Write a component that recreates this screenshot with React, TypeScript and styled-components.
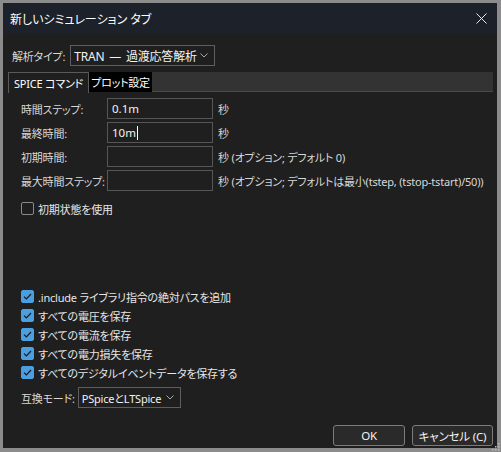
import React from "react";
import styled, { createGlobalStyle } from "styled-components";

const Global = createGlobalStyle`
  html, body { margin: 0; padding: 0; background: #1f1f1f; }
  * { box-sizing: border-box; }
  body {
    font-family: "Noto Sans", "Noto Sans CJK JP", sans-serif;
    font-feature-settings: "palt";
    font-size: 11px;
    letter-spacing: -0.2px;
    color: #e6e6e6;
  }
`;

const Window = styled.div`
  position: relative;
  width: 501px;
  height: 452px;
  display: flex;
  flex-direction: column;
  background: #1f1f1f;
  border-style: solid;
  border-color: #8c8c8c;
  border-width: 3px 4px 4px 3px;
`;

const TitleBar = styled.div`
  height: 31px;
  display: flex;
  align-items: center;
  justify-content: space-between;
  padding: 0 8px 0 7px;
  background: #1d222a;
  color: #ffffff;
  font-size: 12px;
  letter-spacing: 0;
`;

const CloseButton = styled.div`
  width: 16px;
  height: 16px;
  display: flex;
  align-items: center;
  justify-content: center;
`;

const Body = styled.div`
  flex: 1;
  display: flex;
  flex-direction: column;
  padding: 0 4px 2px 5px;
`;

const FieldRow = styled.div<{ $mt?: number; $ml?: number; $gap?: number }>`
  display: flex;
  align-items: center;
  gap: ${(p) => p.$gap ?? 3}px;
  margin-top: ${(p) => p.$mt ?? 0}px;
  margin-left: ${(p) => p.$ml ?? 0}px;
  height: 21px;
`;

const Label = styled.span<{ $w?: number }>`
  flex-shrink: 0;
  color: #d8d8d8;
  white-space: nowrap;
  ${(p) => (p.$w ? `width: ${p.$w}px;` : "")}
`;

const Select = styled.div<{ $w: number; $big?: boolean }>`
  flex-shrink: 0;
  width: ${(p) => p.$w}px;
  height: 21px;
  display: flex;
  align-items: center;
  justify-content: space-between;
  padding: 0 6px 0 3px;
  border: 1px solid #5e5e5e;
  background: #1f1f1f;
  color: #f2f2f2;
  white-space: nowrap;
  font-size: ${(p) => (p.$big ? 12 : 11)}px;
  word-spacing: ${(p) => (p.$big ? 2 : 0)}px;
`;

const Chevron = () => (
  <svg width="8" height="5" viewBox="0 0 8 5">
    <polyline points="0.5,0.5 4,4 7.5,0.5" fill="none" stroke="#a8a8a8" strokeWidth="1" />
  </svg>
);

const TabStrip = styled.div`
  display: flex;
  height: 20px;
  margin-top: 6px;
  background: #333333;
  border-bottom: 1px solid #4a4a4a;
`;

const Tab = styled.div<{ $active?: boolean }>`
  display: flex;
  align-items: center;
  padding: 0 ${(p) => (p.$active ? 5 : 2)}px;
  height: ${(p) => (p.$active ? 21 : 20)}px;
  color: #ffffff;
  background: ${(p) => (p.$active ? "#1f1f1f" : "#000000")};
  border: ${(p) => (p.$active ? "1px solid #5a5a5a" : "none")};
  border-bottom: none;
  white-space: nowrap;
  font-size: 11px;
`;

const Panel = styled.div`
  flex: 1;
  display: flex;
  flex-direction: column;
  padding: 6px 0 0 13px;
`;

const TimeRows = styled.div`
  display: flex;
  flex-direction: column;
  gap: 3px;
`;

const Input = styled.div`
  flex-shrink: 0;
  width: 106px;
  height: 21px;
  display: flex;
  align-items: center;
  padding-left: 4px;
  border: 1px solid #565656;
  background: #1f1f1f;
  color: #f4f4f4;
  font-size: 11.5px;
  letter-spacing: 0;
`;

const Caret = styled.span`
  display: inline-block;
  width: 1px;
  height: 14px;
  background: #ffffff;
  margin-left: 1px;
`;

const Unit = styled.span`
  margin-left: 2px;
  color: #d8d8d8;
  white-space: nowrap;
`;

const CheckRow = styled.div<{ $mt?: number }>`
  display: flex;
  align-items: center;
  gap: 4px;
  height: 19px;
  margin-top: ${(p) => p.$mt ?? 0}px;
  color: #e6e6e6;
  white-space: nowrap;
`;

const Box = styled.span<{ $on?: boolean }>`
  flex-shrink: 0;
  width: 13px;
  height: 13px;
  border-radius: 2px;
  display: flex;
  align-items: center;
  justify-content: center;
  background: ${(p) => (p.$on ? "#4a9fe0" : "transparent")};
  border: 1px solid ${(p) => (p.$on ? "#4a9fe0" : "#8a8a8a")};
`;

const Tick = () => (
  <svg width="9" height="7" viewBox="0 0 9 7">
    <polyline points="1,3.6 3.4,6 8,1" fill="none" stroke="#1a1a1a" strokeWidth="1.2" />
  </svg>
);

const Footer = styled.div`
  display: flex;
  justify-content: flex-end;
  gap: 7px;
`;

const Button = styled.div<{ $w: number }>`
  width: ${(p) => p.$w}px;
  height: 21px;
  display: flex;
  align-items: center;
  justify-content: center;
  border: 1px solid #7c7c7c;
  border-radius: 3px;
  background: #2a2a2a;
  color: #f2f2f2;
  white-space: nowrap;
  font-size: 11.5px;
`;

const Grip = styled.svg`
  position: absolute;
  right: -3px;
  bottom: -3px;
`;

const checks = [
  ".include ライブラリ指令の絶対パスを追加",
  "すべての電圧を保存",
  "すべての電流を保存",
  "すべての電力損失を保存",
  "すべてのデジタルイベントデータを保存する",
];

const timeFields = [
  { label: "時間ステップ:", value: "0.1m", note: "" },
  { label: "最終時間:", value: "10m", note: "", caret: true },
  { label: "初期時間:", value: "", note: "(オプション; デフォルト 0)" },
  {
    label: "最大時間ステップ:",
    value: "",
    note: "(オプション; デフォルトは最小(tstep, (tstop-tstart)/50))",
  },
];

export default function App() {
  return (
    <>
      <Global />
      <Window>
        <TitleBar>
          <span>新しいシミュレーション タブ</span>
          <CloseButton>
            <svg width="11" height="11" viewBox="0 0 11 11">
              <path d="M0.5 0.5 L10.5 10.5 M10.5 0.5 L0.5 10.5" stroke="#e8e8e8" strokeWidth="1" />
            </svg>
          </CloseButton>
        </TitleBar>
        <Body>
          <FieldRow $mt={11} $ml={4} $gap={5}>
            <Label>解析タイプ:</Label>
            <Select $w={145} $big>
              <span>TRAN — 過渡応答解析</span>
              <Chevron />
            </Select>
          </FieldRow>
          <TabStrip>
            <Tab $active>SPICE コマンド</Tab>
            <Tab>プロット設定</Tab>
          </TabStrip>
          <Panel>
            <TimeRows>
              {timeFields.map((f) => (
                <FieldRow key={f.label}>
                  <Label $w={83}>{f.label}</Label>
                  <Input>
                    {f.value}
                    {f.caret && <Caret />}
                  </Input>
                  <Unit>
                    秒{f.note ? `  ${f.note}` : ""}
                  </Unit>
                </FieldRow>
              ))}
            </TimeRows>
            <CheckRow $mt={8}>
              <Box />
              初期状態を使用
            </CheckRow>
            <CheckRow $mt={69}>
              <Box $on>
                <Tick />
              </Box>
              {checks[0]}
            </CheckRow>
            {checks.slice(1).map((c) => (
              <CheckRow key={c}>
                <Box $on>
                  <Tick />
                </Box>
                {c}
              </CheckRow>
            ))}
            <FieldRow $mt={5}>
              <Label>互換モード:</Label>
              <Select $w={103}>
                <span>PSpiceとLTSpice</span>
                <Chevron />
              </Select>
            </FieldRow>
          </Panel>
          <Footer>
            <Button $w={72}>OK</Button>
            <Button $w={81}>キャンセル (C)</Button>
          </Footer>
        </Body>
        <Grip width="8" height="8" viewBox="0 0 8 8">
          <rect x="6" y="0" width="1.5" height="1.5" fill="#bbb" />
          <rect x="3" y="3" width="1.5" height="1.5" fill="#bbb" />
          <rect x="6" y="3" width="1.5" height="1.5" fill="#bbb" />
          <rect x="0" y="6" width="1.5" height="1.5" fill="#bbb" />
          <rect x="3" y="6" width="1.5" height="1.5" fill="#bbb" />
          <rect x="6" y="6" width="1.5" height="1.5" fill="#bbb" />
        </Grip>
      </Window>
    </>
  );
}
